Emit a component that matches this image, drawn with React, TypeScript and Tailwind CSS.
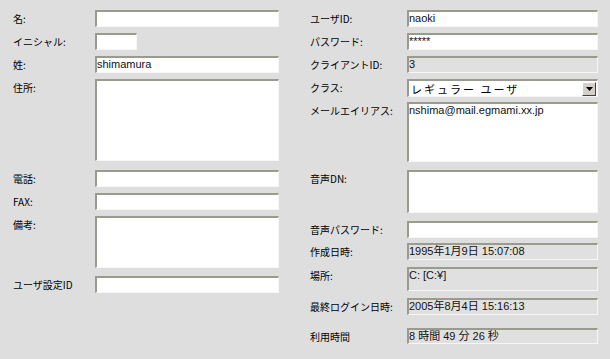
import React from "react";

const inset =
  "border-t-2 border-l-2 border-b border-r border-t-[#9a9a8e] border-l-[#9a9a8e] border-b-[#f6f6f6] border-r-[#f6f6f6]";

type FieldProps = {
  label: string;
  value?: string;
  width: string;
  height: string;
  disabled?: boolean;
  mt: string;
  labelWidth: string;
};

function Field({ label, value, width, height, disabled, mt, labelWidth }: FieldProps) {
  return (
    <div className={`flex items-start ${mt}`}>
      <span className={`${labelWidth} shrink-0 text-[10px] leading-[17px] text-black`}>{label}</span>
      <div
        className={`${width} ${height} ${inset} ${disabled ? "bg-[#e0e0e0]" : "bg-white"} text-[11px] leading-[13px] text-[#111] font-['Liberation_Sans','Noto_Sans_CJK_JP',sans-serif] whitespace-pre`}
      >
        {value}
      </div>
    </div>
  );
}

function SelectField({ label, value, mt }: { label: string; value: string; mt: string }) {
  return (
    <div className={`flex items-start ${mt}`}>
      <span className="w-[97px] shrink-0 text-[10px] leading-[17px] text-black">{label}</span>
      <div className={`flex h-[18px] w-[191px] items-center bg-white ${inset}`}>
        <span className="flex-1 pl-[2px] text-[11px] leading-[14px] tracking-[2px] text-black">{value}</span>
        <div className="mr-[1px] flex h-[14px] w-[14px] items-center justify-center border border-t-[#fff] border-l-[#fff] border-b-[#404040] border-r-[#404040] bg-[#d4d0c8]">
          <svg width="7" height="4" viewBox="0 0 7 4">
            <path d="M0 0h7L3.5 4z" fill="#000" />
          </svg>
        </div>
      </div>
    </div>
  );
}

export default function App() {
  const left = "w-[82px]";
  const right = "w-[97px]";
  return (
    <div className="flex h-[359px] w-[610px] bg-[#dedede] font-['Noto_Sans_CJK_JP','Liberation_Sans',sans-serif]">
      <div className="ml-[13px] flex w-[266px] flex-col pt-[10px]">
        <Field label="名:" width="w-[184px]" height="h-[17px]" mt="mt-0" labelWidth={left} />
        <Field label="イニシャル:" width="w-[42px]" height="h-[17px]" mt="mt-[6px]" labelWidth={left} />
        <Field label="姓:" value="shimamura" width="w-[184px]" height="h-[17px]" mt="mt-[6px]" labelWidth={left} />
        <Field label="住所:" width="w-[184px]" height="h-[82px]" mt="mt-[6px]" labelWidth={left} />
        <Field label="電話:" width="w-[184px]" height="h-[17px]" mt="mt-[9px]" labelWidth={left} />
        <Field label="FAX:" width="w-[184px]" height="h-[17px]" mt="mt-[6px]" labelWidth={left} />
        <Field label="備考:" width="w-[184px]" height="h-[52px]" mt="mt-[6px]" labelWidth={left} />
        <Field label="ユーザ設定ID" width="w-[184px]" height="h-[17px]" mt="mt-[8px]" labelWidth={left} />
      </div>
      <div className="ml-[31px] flex flex-col pt-[10px]">
        <Field label="ユーザID:" value="naoki" width="w-[191px]" height="h-[17px]" mt="mt-0" labelWidth={right} />
        <Field label="パスワード:" value="*****" width="w-[191px]" height="h-[17px]" mt="mt-[6px]" labelWidth={right} />
        <Field label="クライアントID:" value="3" width="w-[191px]" height="h-[17px]" mt="mt-[6px]" labelWidth={right} disabled />
        <SelectField label="クラス:" value="レギュラー ユーザ" mt="mt-[6px]" />
        <Field label="メールエイリアス:" value="nshima@mail.egmami.xx.jp" width="w-[191px]" height="h-[60px]" mt="mt-[5px]" labelWidth={right} />
        <Field label="音声DN:" width="w-[191px]" height="h-[43px]" mt="mt-[8px]" labelWidth={right} />
        <Field label="音声パスワード:" width="w-[191px]" height="h-[17px]" mt="mt-[8px]" labelWidth={right} />
        <Field label="作成日時:" value="1995年1月9日 15:07:08" width="w-[191px]" height="h-[17px]" mt="mt-[5px]" labelWidth={right} disabled />
        <Field label="場所:" value="C: [C:¥]" width="w-[191px]" height="h-[24px]" mt="mt-[7px]" labelWidth={right} disabled />
        <Field label="最終ログイン日時:" value="2005年8月4日 15:16:13" width="w-[191px]" height="h-[17px]" mt="mt-[7px]" labelWidth={right} disabled />
        <Field label="利用時間" value="8 時間 49 分 26 秒" width="w-[191px]" height="h-[16px]" mt="mt-[13px]" labelWidth={right} disabled />
      </div>
    </div>
  );
}
